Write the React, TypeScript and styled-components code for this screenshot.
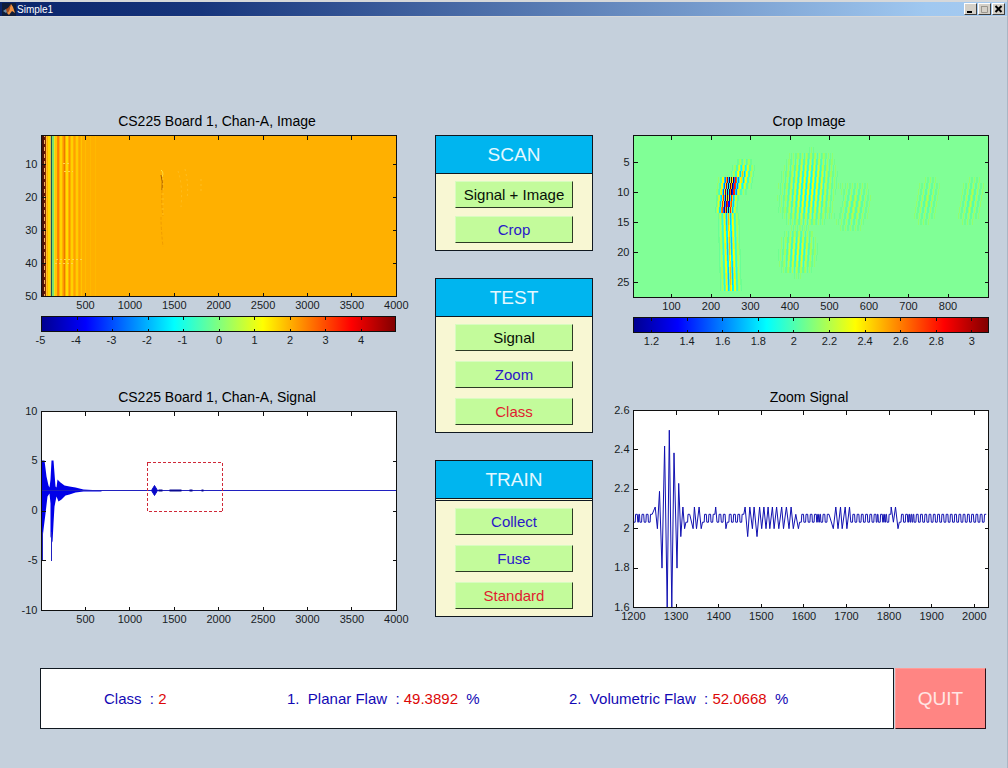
import React from "react";
import styled, { createGlobalStyle } from "styled-components";

const FONT = '"Liberation Sans", Arial, Helvetica, sans-serif';

const GlobalStyle = createGlobalStyle`
  *, *::before, *::after { box-sizing: border-box; }
  html, body { margin: 0; padding: 0; background: #c5d0dc; }
  body { font-family: ${FONT}; color: #000; }
`;

/* ---------- window frame ---------- */

const Window = styled.div`
  min-height: 100vh;
  display: flex;
  flex-direction: column;
  background: #c5d0dc;
  border-right: 1px solid #aab6c4;
`;

const TitleBar = styled.header`
  display: flex;
  align-items: center;
  gap: 1px;
  height: 17px;
  padding: 0 2px;
  border-top: 2px solid #d6d8da;
  border-bottom: 1px solid #d6d8da;
  background: linear-gradient(90deg, #0a246a 0%, #17357c 20%, #a0c8f0 92%, #a6caf0 100%);
`;

const WindowTitle = styled.h1`
  flex: 1;
  margin: 0;
  font-size: 10px;
  line-height: 13px;
  font-weight: 400;
  color: #fff;
`;

const WindowControls = styled.div`
  display: flex;
  gap: 1px;
`;

const ControlButton = styled.button`
  display: flex;
  align-items: center;
  justify-content: center;
  width: 13px;
  height: 12px;
  padding: 0;
  color: #000;
  background: #d4d0c8;
  border: 1px solid;
  border-color: #fff #404040 #404040 #fff;

  &:disabled { color: #9a968e; }
`;

/* ---------- page layout ---------- */

const Workspace = styled.main`
  display: flex;
  flex-direction: column;
  gap: 42px;
  padding-top: 95px;
  padding-bottom: 36px;
`;

const Columns = styled.div`
  display: grid;
  grid-template-columns: minmax(0, 400fr) 158px minmax(0, 386fr);
  gap: 21px;
  padding: 0 7px 0 14px;
`;

const FigureColumn = styled.div`
  display: flex;
  flex-direction: column;
  gap: 38px;
`;

const Figure = styled.figure<{ $left: number; $right: number }>`
  margin: 0;

  figcaption {
    padding: 0 ${(p) => p.$right}px 0 ${(p) => p.$left}px;
    font-size: 14px;
    line-height: 18px;
    text-align: center;
    white-space: nowrap;
  }
`;

const Plot = styled.svg`
  display: block;
  width: 100%;
  height: auto;
  overflow: visible;
  font-family: ${FONT};
  font-size: 11px;
`;

/* ---------- control panels ---------- */

const PanelColumn = styled.div`
  display: flex;
  flex-direction: column;
  gap: 27px;
  padding-top: 23px;
`;

const Panel = styled.section`
  display: flex;
  flex-direction: column;
  border: 1px solid #101820;
  background: #f8f7d3;
`;

const PanelHeading = styled.h2<{ $double?: boolean }>`
  margin: 0;
  font-size: 19px;
  line-height: 37px;
  font-weight: 400;
  text-align: center;
  color: #e4f8ff;
  background: #00b5ef;
  background-clip: padding-box;
  border-bottom: ${(p) => (p.$double ? "3px double" : "1px solid")} #101820;
`;

const PanelBody = styled.div<{ $gap: number }>`
  display: flex;
  flex-direction: column;
  align-items: center;
  gap: ${(p) => p.$gap}px;
  padding: 7px 0;
`;

const ActionButton = styled.button<{ $color: string }>`
  width: 118px;
  height: 27px;
  padding: 0;
  font-family: inherit;
  font-size: 15px;
  line-height: 24px;
  color: ${(p) => p.$color};
  background: #c3fb9b;
  border: 1px solid;
  border-color: #d8fcc0 #2c3a24 #2c3a24 #d8fcc0;
`;

/* ---------- result bar ---------- */

const ResultRow = styled.footer`
  display: flex;
  gap: 1px;
  padding: 0 21px 0 40px;
`;

const Results = styled.div`
  flex: 1;
  display: grid;
  grid-template-columns: 183fr 282fr 324fr;
  align-items: center;
  height: 61px;
  padding-left: 63px;
  background: #fff;
  border: 1px solid #101820;
`;

const Result = styled.p`
  margin: 0;
  font-size: 15px;
  line-height: 18px;
  white-space: pre;
  color: #1208b4;
`;

const Value = styled.output`
  color: #dc0808;
`;

const QuitButton = styled.button`
  width: 91px;
  height: 61px;
  padding: 0;
  font-family: inherit;
  font-size: 19px;
  color: #ffe6e4;
  background: #ff8583;
  border: 1px solid;
  border-color: #ff9c98 #2a1018 #2a1018 #ff9c98;
`;

/* ---------- plot helpers ---------- */

type Tick = [position: number, label: string];

const ticks = (labels: (string | number)[], start: number, step: number): Tick[] =>
  labels.map((l, i) => [start + i * step, String(l)]);

interface AxesProps {
  x: number;
  y: number;
  w: number;
  h: number;
  xTicks: Tick[];
  yTicks: Tick[];
}

function Axes({ x, y, w, h, xTicks, yTicks }: AxesProps) {
  const marks = [
    ...xTicks.map(([p]) => `M${p} ${y}v4M${p} ${y + h}v-4`),
    ...yTicks.map(([p]) => `M${x} ${p}h4M${x + w} ${p}h-4`),
  ].join("");
  return (
    <g>
      <g fill="none" stroke="#101010" shapeRendering="crispEdges">
        <rect x={x} y={y} width={w} height={h} />
        <path d={marks} />
      </g>
      <g fill="#181c24" textAnchor="middle">
        {xTicks.map(([p, l]) => (
          <text key={l} x={p} y={y + h + 12}>{l}</text>
        ))}
      </g>
      <g fill="#181c24" textAnchor="end">
        {yTicks.map(([p, l]) => (
          <text key={l} x={x - 4} y={p + 3}>{l}</text>
        ))}
      </g>
    </g>
  );
}

interface ColorBarProps {
  id: string;
  x: number;
  y: number;
  w: number;
  marks: Tick[];
}

function ColorBar({ id, x, y, w, marks }: ColorBarProps) {
  const inner = marks.filter(([p]) => p > x + 2);
  return (
    <g>
      <linearGradient id={id}>
        <stop offset="0" stopColor="#00008f" />
        <stop offset="0.125" stopColor="#0000ff" />
        <stop offset="0.375" stopColor="#00ffff" />
        <stop offset="0.625" stopColor="#ffff00" />
        <stop offset="0.875" stopColor="#ff0000" />
        <stop offset="1" stopColor="#800000" />
      </linearGradient>
      <g stroke="#101010" fill="none" shapeRendering="crispEdges">
        <rect x={x} y={y} width={w} height={15} fill={`url(#${id})`} />
        <path d={inner.map(([p]) => `M${p} ${y}v3M${p} ${y + 15}v-3`).join("")} />
      </g>
      <g fill="#181c24" textAnchor="middle">
        {marks.map(([p, l]) => (
          <text key={l} x={l.startsWith("-") ? p - 1 : p} y={y + 27}>{l}</text>
        ))}
      </g>
    </g>
  );
}

const clamp = (v: number) => Math.max(0, Math.min(1, v));

function jet(v: number) {
  const t = (Math.max(-1, Math.min(1, v)) + 1) / 2;
  const c = [3, 2, 1].map((k) => Math.round(255 * clamp(1.5 - Math.abs(4 * t - k))));
  return `rgb(${c[0]},${c[1]},${c[2]})`;
}

/* ---------- scan image ---------- */

const BANDS: [x: number, w: number, color: string][] = [
  [1, 2, "#4a1008"], [3, 1, "#f0b060"], [4, 1, "#8a3000"], [5, 1, "#ffc030"],
  [7, 2, "#ffd800"], [9, 1, "#e0c040"], [10, 1, "#185858"], [11, 2, "#78e070"],
  [13, 1, "#f0e020"], [14, 2, "#ffc800"], [16, 1, "#f88800"], [17, 1, "#ff7c00"],
  [19, 2, "#ffd400"], [22, 1, "#ff9400"], [23, 1, "#e87c00"], [25, 2, "#ffdc00"],
  [28, 1, "#ff9000"], [30, 2, "#ffd000"], [33, 1, "#ffa000"], [35, 2, "#ffcc00"],
  [38, 1, "#ffa400"], [40, 1, "#ffc400"], [44, 1, "#ffbc00"], [49, 1, "#ffb800"],
  [54, 1, "#ffb800"],
];

function ScanImage() {
  return (
    <Plot viewBox="0 0 400 220" role="img" aria-label="Board scan image">
      <rect x="27" y="5" width="355" height="162" fill="#ffb000" />
      <g transform="translate(27 5)" shapeRendering="crispEdges">
        {BANDS.map(([x, w, c]) => (
          <rect key={x} x={x} y={1} width={w} height={161} fill={c} />
        ))}
        <path d="M3.5 2V162" stroke="#601808" strokeDasharray="3 4" />
        <path d="M22 28h8M23 36h9M15 124h26M14 128h20" stroke="#ffd44c" strokeDasharray="2 2" />
      </g>
      <g transform="translate(27 5)" fill="none">
        <path d="M120 35q3 2 1 7" stroke="#ffe040" />
        <path d="M120 40q2 6 1 15" stroke="#a85c00" />
        <path d="M121 55q-1 14 1 26M120 82q0 12 2 30" stroke="#f09c00" strokeDasharray="3 2" />
        <path d="M122 38v44M137 36q5 14 3 36M144 34q4 16 2 30M160 44v14" stroke="#ffbe20" strokeDasharray="2 3" />
      </g>
      <Axes
        x={27.5} y={5.5} w={355} h={161}
        xTicks={ticks([500, 1000, 1500, 2000, 2500, 3000, 3500, 4000], 71.5, 44.4)}
        yTicks={ticks([10, 20, 30, 40, 50], 34.5, 33)}
      />
      <ColorBar
        id="scan-scale" x={27.5} y={186.5} w={354}
        marks={ticks([-5, -4, -3, -2, -1, 0, 1, 2, 3, 4], 27.5, 35.5)}
      />
    </Plot>
  );
}

/* ---------- crop image ---------- */

interface Packet {
  rows: [first: number, last: number];
  center: number;
  slope: number;
  width: number;
  period: number;
  peak: number;
  taper?: boolean;
}

const PACKETS: Packet[] = [
  { rows: [14, 26], center: 95, slope: 0.2, width: 9, period: 4.2, peak: 0.4 },
  { rows: [5, 10], center: 111, slope: -1, width: 10, period: 4.4, peak: 0.4, taper: true },
  { rows: [8, 10], center: 98, slope: -0.9, width: 9, period: 4.3, peak: 1.3 },
  { rows: [11, 13], center: 94, slope: -0.6, width: 8, period: 4.3, peak: 1.1 },
  { rows: [3, 16], center: 178, slope: -0.5, width: 26, period: 4.3, peak: 0.28, taper: true },
  { rows: [16, 24], center: 166, slope: -0.4, width: 18, period: 4.3, peak: 0.22, taper: true },
  { rows: [8, 17], center: 225, slope: -1, width: 18, period: 5, peak: 0.12, taper: true },
  { rows: [7, 16], center: 298, slope: -1, width: 14, period: 5, peak: 0.1, taper: true },
  { rows: [7, 16], center: 342, slope: -1, width: 14, period: 5, peak: 0.11, taper: true },
];

function packetCells() {
  const cells = new Map<string, { x: number; y: number; v: number }>();
  for (const p of PACKETS) {
    const count = p.rows[1] - p.rows[0] + 1;
    for (let n = 0; n < count; n++) {
      const c = p.center + n * p.slope;
      const y = (p.rows[0] + n) * 6 - 6;
      const weight = p.taper ? Math.sin((Math.PI * (n + 0.5)) / count) : 1;
      for (let x = Math.round(c - p.width * 2); x <= c + p.width * 2; x++) {
        if (x < 1 || x > 353) continue;
        const amp = p.peak * weight * Math.exp(-(((x - c) / p.width) ** 2) * 1.6);
        const v = amp * Math.cos((2 * Math.PI * (x - c)) / p.period);
        const key = `${x}:${y}`;
        cells.set(key, { x, y, v: (cells.get(key)?.v ?? 0) + v });
      }
    }
  }
  return [...cells.values()].filter((c) => Math.abs(c.v) > 0.03);
}

const CELLS = packetCells();

function CropImage() {
  return (
    <Plot viewBox="0 0 386 220" role="img" aria-label="Cropped scan image">
      <rect x="19" y="5" width="355" height="163" fill="#80ff96" />
      <g transform="translate(19 5)" shapeRendering="crispEdges">
        {CELLS.map((c, i) => (
          <rect key={i} x={c.x} y={c.y} width={1} height={6} fill={jet(c.v)} />
        ))}
      </g>
      <Axes
        x={19.5} y={5.5} w={355} h={162}
        xTicks={ticks([100, 200, 300, 400, 500, 600, 700, 800], 57.5, 39.5)}
        yTicks={ticks([5, 10, 15, 20, 25], 32.5, 30)}
      />
      <ColorBar
        id="crop-scale" x={19.5} y={187.5} w={355}
        marks={ticks(["1.2", "1.4", "1.6", "1.8", "2", "2.2", "2.4", "2.6", "2.8", "3"], 37.5, 35.6)}
      />
    </Plot>
  );
}

/* ---------- full signal ---------- */

const ENVELOPE =
  "M0 49L3 49L5 65L7 74L8 76L9 68L10 49L12 49L14 75L15 76L16 68L19 71L23 74L28 75L34 76L42 78L60 79" +
  "L60 80L42 80L34 81L28 83L24 84L20 88L17 90L15 85L13 95L12 112L11 131L9 125L9 92L8 82L6 85L4 102L2 118L1 127L0 129Z";

function SignalPlot() {
  return (
    <Plot viewBox="0 0 400 220" role="img" aria-label="Board signal">
      <rect x="27" y="5" width="355" height="200" fill="#fff" />
      <g transform="translate(27.5 5.5)">
        <path d={ENVELOPE} fill="#0000e8" />
        <path d="M1 120V149M10 120V149M0 79H355" stroke="#2020c0" fill="none" shapeRendering="crispEdges" />
        <path d="M110 79L113 74L116 79L113 84Z" fill="#0808c8" stroke="#0808c8" />
        <path d="M117 79h4M128 79h12M148 79h3M160 79h2" stroke="#080890" strokeWidth="2" />
        <rect
          x="106" y="51" width="75" height="49"
          fill="none" stroke="#d02838" strokeDasharray="3 2" shapeRendering="crispEdges"
        />
      </g>
      <Axes
        x={27.5} y={5.5} w={355} h={199}
        xTicks={ticks([500, 1000, 1500, 2000, 2500, 3000, 3500, 4000], 71.5, 44.4)}
        yTicks={ticks([10, 5, 0, -5, -10], 5.5, 49.75)}
      />
    </Plot>
  );
}

/* ---------- zoomed signal ---------- */

const HIGH = 2.073;
const LOW = 2.033;

const SPIKES: [sample: number, value: number][] = [
  [1251, 2.11], [1256, 2], [1261, 2.19], [1267, 1.8], [1273, 2.42], [1279, 1.6],
  [1284, 2.5], [1290, 1.6], [1295, 2.385], [1302, 1.8], [1306, 2.23], [1311, 1.96],
  [1316, 2.11], [1320, 2], [1340, 2], [1343, 2.11], [1348, 2], [1354, 2.11], [1359, 2],
  [1393, 2.11], [1417, 2], [1462, 2.11], [1468, 1.96], [1473, 2.11], [1479, 2],
  [1483, 2.11], [1490, 1.96], [1496, 2.11], [1501, 2], [1506, 2.11], [1511, 2],
  [1516, 2.11], [1520, 2], [1526, 2.11], [1530, 2], [1536, 2.11], [1541, 2],
  [1548, 2.11], [1552, 2], [1559, 2.11], [1565, 2], [1570, 2.11], [1575, 2], [1581, HIGH],
  [1587, 2], [1669, 2], [1675, 2.11], [1680, 2], [1686, 2.11], [1690, 2], [1697, 2.11],
  [1701, 2], [1707, 2.11], [1805, 2.11], [1810, LOW], [1815, 2.11], [1821, 2],
];

const DENSE: [from: number, to: number][] = [
  [1204, 1212], [1630, 1640], [1766, 1774], [1782, 1792], [1842, 1858],
];

function zoomTrace() {
  const px = (s: number) => ((s - 1200) * 0.426).toFixed(1);
  const py = (v: number) => ((2.6 - v) * 197).toFixed(1);
  const out: string[] = [];
  const add = (s: number, v: number) => out.push(`${px(s)} ${py(v)}`);
  let s = 1200;
  const fillTo = (end: number) => {
    while (s + 7 < end) {
      const dense = DENSE.some(([a, b]) => s >= a && s < b);
      const half = dense ? 1.5 : 4;
      add(s, LOW);
      add(s + half, LOW);
      add(s + half + 1, HIGH);
      add(s + half * 2 + 1, HIGH);
      s += half * 2 + 2;
    }
  };
  for (const [sample, value] of SPIKES) {
    fillTo(sample - 2);
    add(sample, value);
    s = sample + 3;
  }
  fillTo(2034);
  return "M" + out.join("L");
}

const ZOOM_TRACE = zoomTrace();

function ZoomPlot() {
  return (
    <Plot viewBox="0 0 386 220" role="img" aria-label="Zoomed signal">
      <rect x="19" y="4" width="355" height="198" fill="#fff" />
      <g transform="translate(19.5 4.5)">
        <path d={ZOOM_TRACE} fill="none" stroke="#1010b0" />
      </g>
      <Axes
        x={19.5} y={4.5} w={355} h={197}
        xTicks={ticks([1200, 1300, 1400, 1500, 1600, 1700, 1800, 1900, 2000], 19.5, 42.6)}
        yTicks={ticks(["2.6", "2.4", "2.2", "2", "1.8", "1.6"], 4.5, 39.4)}
      />
    </Plot>
  );
}

/* ---------- application ---------- */

const BLACK = "#081008";
const BLUE = "#2a18c8";
const RED = "#e01c30";

const PANELS = [
  { title: "SCAN", gap: 8, actions: [["Signal + Image", BLACK], ["Crop", BLUE]] },
  { title: "TEST", gap: 10, actions: [["Signal", BLACK], ["Zoom", BLUE], ["Class", RED]] },
  { title: "TRAIN", gap: 10, double: true, actions: [["Collect", BLUE], ["Fuse", BLUE], ["Standard", RED]] },
];

function MatlabLogo() {
  return (
    <svg width="14" height="13" viewBox="0 0 14 13" aria-hidden="true">
      <rect width="14" height="13" fill="#101c38" />
      <path d="M1 8L4 6L6 8L4 10Z" fill="#6c8ca8" />
      <path d="M4 6L6 5L9 1L7 8L5 10Z" fill="#a84818" />
      <path d="M9 1L11 4L13 10L10 8L7 12L5 10L7 8Z" fill="#f09040" />
    </svg>
  );
}

export default function App() {
  return (
    <>
      <GlobalStyle />
      <Window>
        <TitleBar>
          <MatlabLogo />
          <WindowTitle>Simple1</WindowTitle>
          <WindowControls>
            <ControlButton type="button" aria-label="Minimize">
              <svg width="9" height="8" viewBox="0 0 9 8"><path d="M1 6h5v2H1z" fill="currentColor" /></svg>
            </ControlButton>
            <ControlButton type="button" aria-label="Maximize" disabled>
              <svg width="9" height="8" viewBox="0 0 9 8"><path d="M1 1.5H7.500V7.500H1.500V1" fill="none" stroke="currentColor" /></svg>
            </ControlButton>
            <ControlButton type="button" aria-label="Close">
              <svg width="9" height="8" viewBox="0 0 9 8"><path d="M1.500 1L7.500 7M7.500 1L1.500 7" stroke="currentColor" strokeWidth="2" /></svg>
            </ControlButton>
          </WindowControls>
        </TitleBar>
        <Workspace>
          <Columns>
            <FigureColumn>
              <Figure $left={26} $right={20}>
                <figcaption>CS225 Board 1, Chan-A, Image</figcaption>
                <ScanImage />
              </Figure>
              <Figure $left={26} $right={20}>
                <figcaption>CS225 Board 1, Chan-A, Signal</figcaption>
                <SignalPlot />
              </Figure>
            </FigureColumn>
            <PanelColumn>
              {PANELS.map((p) => (
                <Panel key={p.title} aria-label={p.title}>
                  <PanelHeading $double={p.double}>{p.title}</PanelHeading>
                  <PanelBody $gap={p.gap}>
                    {p.actions.map(([label, color]) => (
                      <ActionButton key={label} type="button" $color={color}>{label}</ActionButton>
                    ))}
                  </PanelBody>
                </Panel>
              ))}
            </PanelColumn>
            <FigureColumn>
              <Figure $left={18} $right={14}>
                <figcaption>Crop Image</figcaption>
                <CropImage />
              </Figure>
              <Figure $left={18} $right={14}>
                <figcaption>Zoom Signal</figcaption>
                <ZoomPlot />
              </Figure>
            </FigureColumn>
          </Columns>
          <ResultRow>
            <Results>
              <Result>Class{"  "}: <Value>2</Value></Result>
              <Result>1.{"  "}Planar Flaw{"  "}: <Value>49.3892</Value>{"  "}%</Result>
              <Result>2.{"  "}Volumetric Flaw{"  "}: <Value>52.0668</Value>{"  "}%</Result>
            </Results>
            <QuitButton type="button">QUIT</QuitButton>
          </ResultRow>
        </Workspace>
      </Window>
    </>
  );
}
